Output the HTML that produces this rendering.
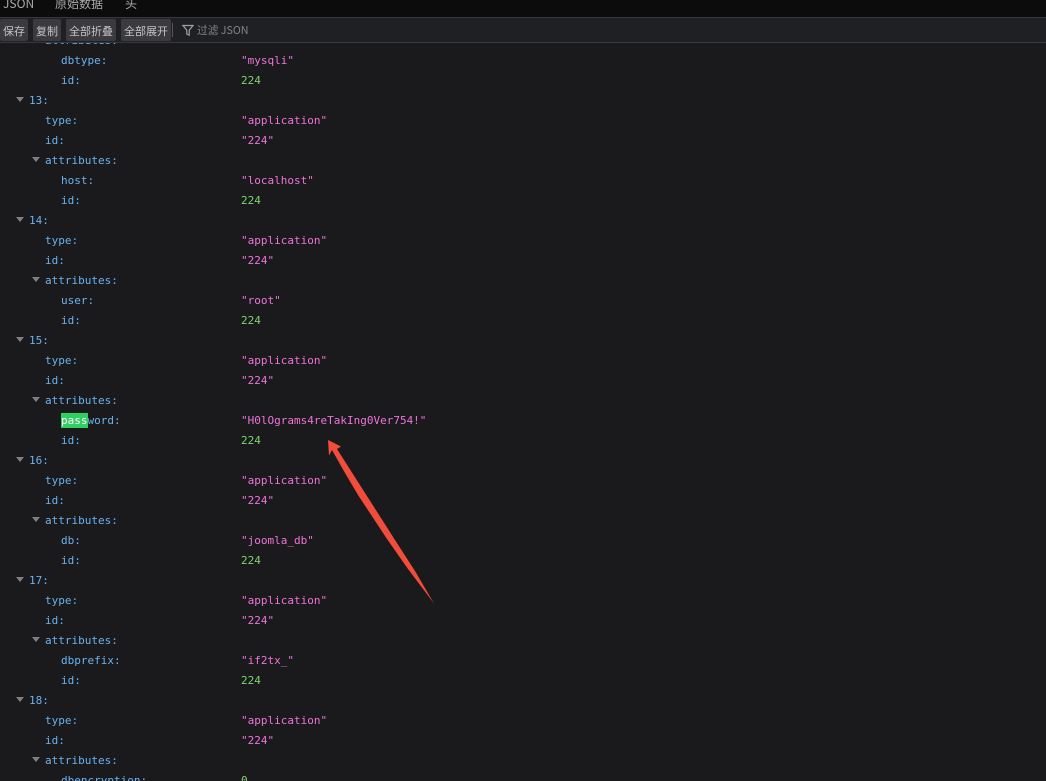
<!DOCTYPE html>
<html>
<head>
<meta charset="utf-8">
<style>
html,body{margin:0;padding:0;background:#1a1a1d;width:1046px;height:781px;overflow:hidden}
body{position:relative}
#tabs{position:absolute;left:0;top:0;width:1046px;height:17px;background:#0c0c0d;border-bottom:1px solid #38383d;z-index:3;font:12px "Noto Sans CJK SC",sans-serif;color:#aaaaac}
#tabs span{position:absolute;top:-4px;line-height:16px;white-space:nowrap}
#bar{position:absolute;left:0;top:18px;width:1046px;height:24px;background:#1f2023;border-bottom:1px solid #3a3a3e;z-index:3}
.b{position:absolute;top:1px;height:22px;background:#3b3b3f;border-radius:2px;color:#c4c4c6;font:11px/24px "Noto Sans CJK SC",sans-serif;text-align:center;white-space:nowrap}
#sep{position:absolute;left:172px;top:5px;width:1px;height:14px;background:#55555a}
#flt{position:absolute;left:197px;top:4px;font:10.7px/17px "Noto Sans CJK SC",sans-serif;color:#85858a;white-space:nowrap}
#list{position:absolute;left:0;top:31px;width:1046px;font:11px/20px "DejaVu Sans Mono",monospace;z-index:1}
.r{position:relative;height:20px;white-space:pre}
.k{position:absolute;top:0;color:#6ab2ef}
.d1{left:29px}.d2{left:45px}.d3{left:61px}
.s,.n{position:absolute;left:241px;top:0}
.s{color:#ee74d9}
.n{color:#7ed46e}
.t{position:absolute;top:6px;width:0;height:0;border-left:4.5px solid transparent;border-right:4.5px solid transparent;border-top:5px solid #808084}
.t1{left:15.5px}.t2{left:31.5px}
mark{display:inline-block;background:#2fcf62;color:#fff;line-height:15px;height:15px}
</style>
</head>
<body>
<div id="tabs"><span style="left:3px">JSON</span><span style="left:55px">原始数据</span><span style="left:125px">头</span></div>
<div id="bar">
<div class="b" style="left:0;width:28px">保存</div>
<div class="b" style="left:33px;width:28px">复制</div>
<div class="b" style="left:66px;width:50px">全部折叠</div>
<div class="b" style="left:121px;width:50px">全部展开</div>
<div id="sep"></div>
<svg style="position:absolute;left:182px;top:6px" width="12" height="13" viewBox="0 0 12 13"><path d="M1 1.5h10L7.2 6.2v5L4.8 10V6.2z" fill="none" stroke="#a0a0a5" stroke-width="1.2"/></svg>
<div id="flt">过滤 JSON</div>
</div>
<div id="list">
<div class="r"><span class="t t2"></span><span class="k d2">attributes:</span></div>
<div class="r"><span class="k d3">dbtype:</span><span class="s">"mysqli"</span></div>
<div class="r"><span class="k d3">id:</span><span class="n">224</span></div>
<div class="r"><span class="t t1"></span><span class="k d1">13:</span></div>
<div class="r"><span class="k d2">type:</span><span class="s">"application"</span></div>
<div class="r"><span class="k d2">id:</span><span class="s">"224"</span></div>
<div class="r"><span class="t t2"></span><span class="k d2">attributes:</span></div>
<div class="r"><span class="k d3">host:</span><span class="s">"localhost"</span></div>
<div class="r"><span class="k d3">id:</span><span class="n">224</span></div>
<div class="r"><span class="t t1"></span><span class="k d1">14:</span></div>
<div class="r"><span class="k d2">type:</span><span class="s">"application"</span></div>
<div class="r"><span class="k d2">id:</span><span class="s">"224"</span></div>
<div class="r"><span class="t t2"></span><span class="k d2">attributes:</span></div>
<div class="r"><span class="k d3">user:</span><span class="s">"root"</span></div>
<div class="r"><span class="k d3">id:</span><span class="n">224</span></div>
<div class="r"><span class="t t1"></span><span class="k d1">15:</span></div>
<div class="r"><span class="k d2">type:</span><span class="s">"application"</span></div>
<div class="r"><span class="k d2">id:</span><span class="s">"224"</span></div>
<div class="r"><span class="t t2"></span><span class="k d2">attributes:</span></div>
<div class="r"><span class="k d3"><mark>pass</mark>word:</span><span class="s">"H0lOgrams4reTakIng0Ver754!"</span></div>
<div class="r"><span class="k d3">id:</span><span class="n">224</span></div>
<div class="r"><span class="t t1"></span><span class="k d1">16:</span></div>
<div class="r"><span class="k d2">type:</span><span class="s">"application"</span></div>
<div class="r"><span class="k d2">id:</span><span class="s">"224"</span></div>
<div class="r"><span class="t t2"></span><span class="k d2">attributes:</span></div>
<div class="r"><span class="k d3">db:</span><span class="s">"joomla_db"</span></div>
<div class="r"><span class="k d3">id:</span><span class="n">224</span></div>
<div class="r"><span class="t t1"></span><span class="k d1">17:</span></div>
<div class="r"><span class="k d2">type:</span><span class="s">"application"</span></div>
<div class="r"><span class="k d2">id:</span><span class="s">"224"</span></div>
<div class="r"><span class="t t2"></span><span class="k d2">attributes:</span></div>
<div class="r"><span class="k d3">dbprefix:</span><span class="s">"if2tx_"</span></div>
<div class="r"><span class="k d3">id:</span><span class="n">224</span></div>
<div class="r"><span class="t t1"></span><span class="k d1">18:</span></div>
<div class="r"><span class="k d2">type:</span><span class="s">"application"</span></div>
<div class="r"><span class="k d2">id:</span><span class="s">"224"</span></div>
<div class="r"><span class="t t2"></span><span class="k d2">attributes:</span></div>
<div class="r"><span class="k d3">dbencryption:</span><span class="n">0</span></div>
</div>
<svg style="position:absolute;left:0;top:0;z-index:2" width="1046" height="781" viewBox="0 0 1046 781"><path d="M328 440L341 446.5L337 449L369.5 500L395 540L415 571L434 603.5L408 569L387 539L358 495L345 473L332 450L329 455.5z" fill="#f14c3c"/></svg>
</body>
</html>
